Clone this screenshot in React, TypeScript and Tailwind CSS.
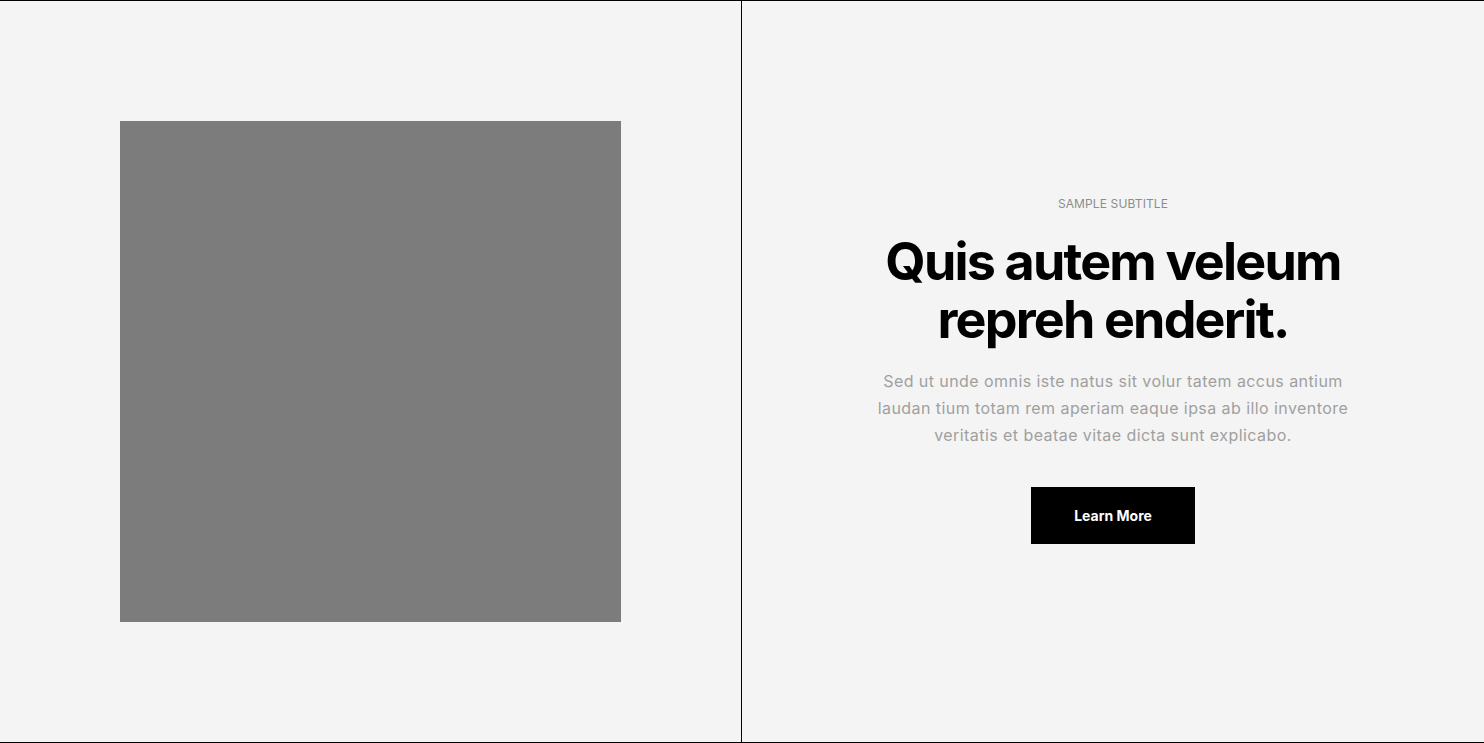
export default function App() {
  return (
    <div className="min-h-screen bg-[#f4f4f4] font-['Inter',sans-serif]">
      <section className="grid grid-cols-2 border-y border-black h-[743px]">
        {/* Image side */}
        <div className="border-r border-black p-[120px] flex">
          <div className="flex-1 bg-[#7c7c7d]" />
        </div>

        {/* Text side */}
        <div className="flex flex-col items-center justify-center text-center px-10 pb-[4px]">
          <p className="text-[12px] leading-[18px] uppercase text-[#8c8c8c] tracking-[0.01em]">Sample Subtitle</p>
          <h2 className="mt-[20px] text-[52px] leading-[58px] font-bold tracking-[-0.035em] text-black">
            Quis autem veleum
            <br />
            repreh enderit.
          </h2>
          <p className="mt-[19px] max-w-[490px] text-[16px] leading-[27px] tracking-[0.027em] text-[#a0a0a0]">
            Sed ut unde omnis iste natus sit volur tatem accus antium
            <br />
            laudan tium totam rem aperiam eaque ipsa ab illo inventore
            <br />
            veritatis et beatae vitae dicta sunt explicabo.
          </p>
          <button className="mt-[38px] w-[164px] h-[57px] bg-black text-white text-[14px] font-bold">
            Learn More
          </button>
        </div>
      </section>
    </div>
  );
}
